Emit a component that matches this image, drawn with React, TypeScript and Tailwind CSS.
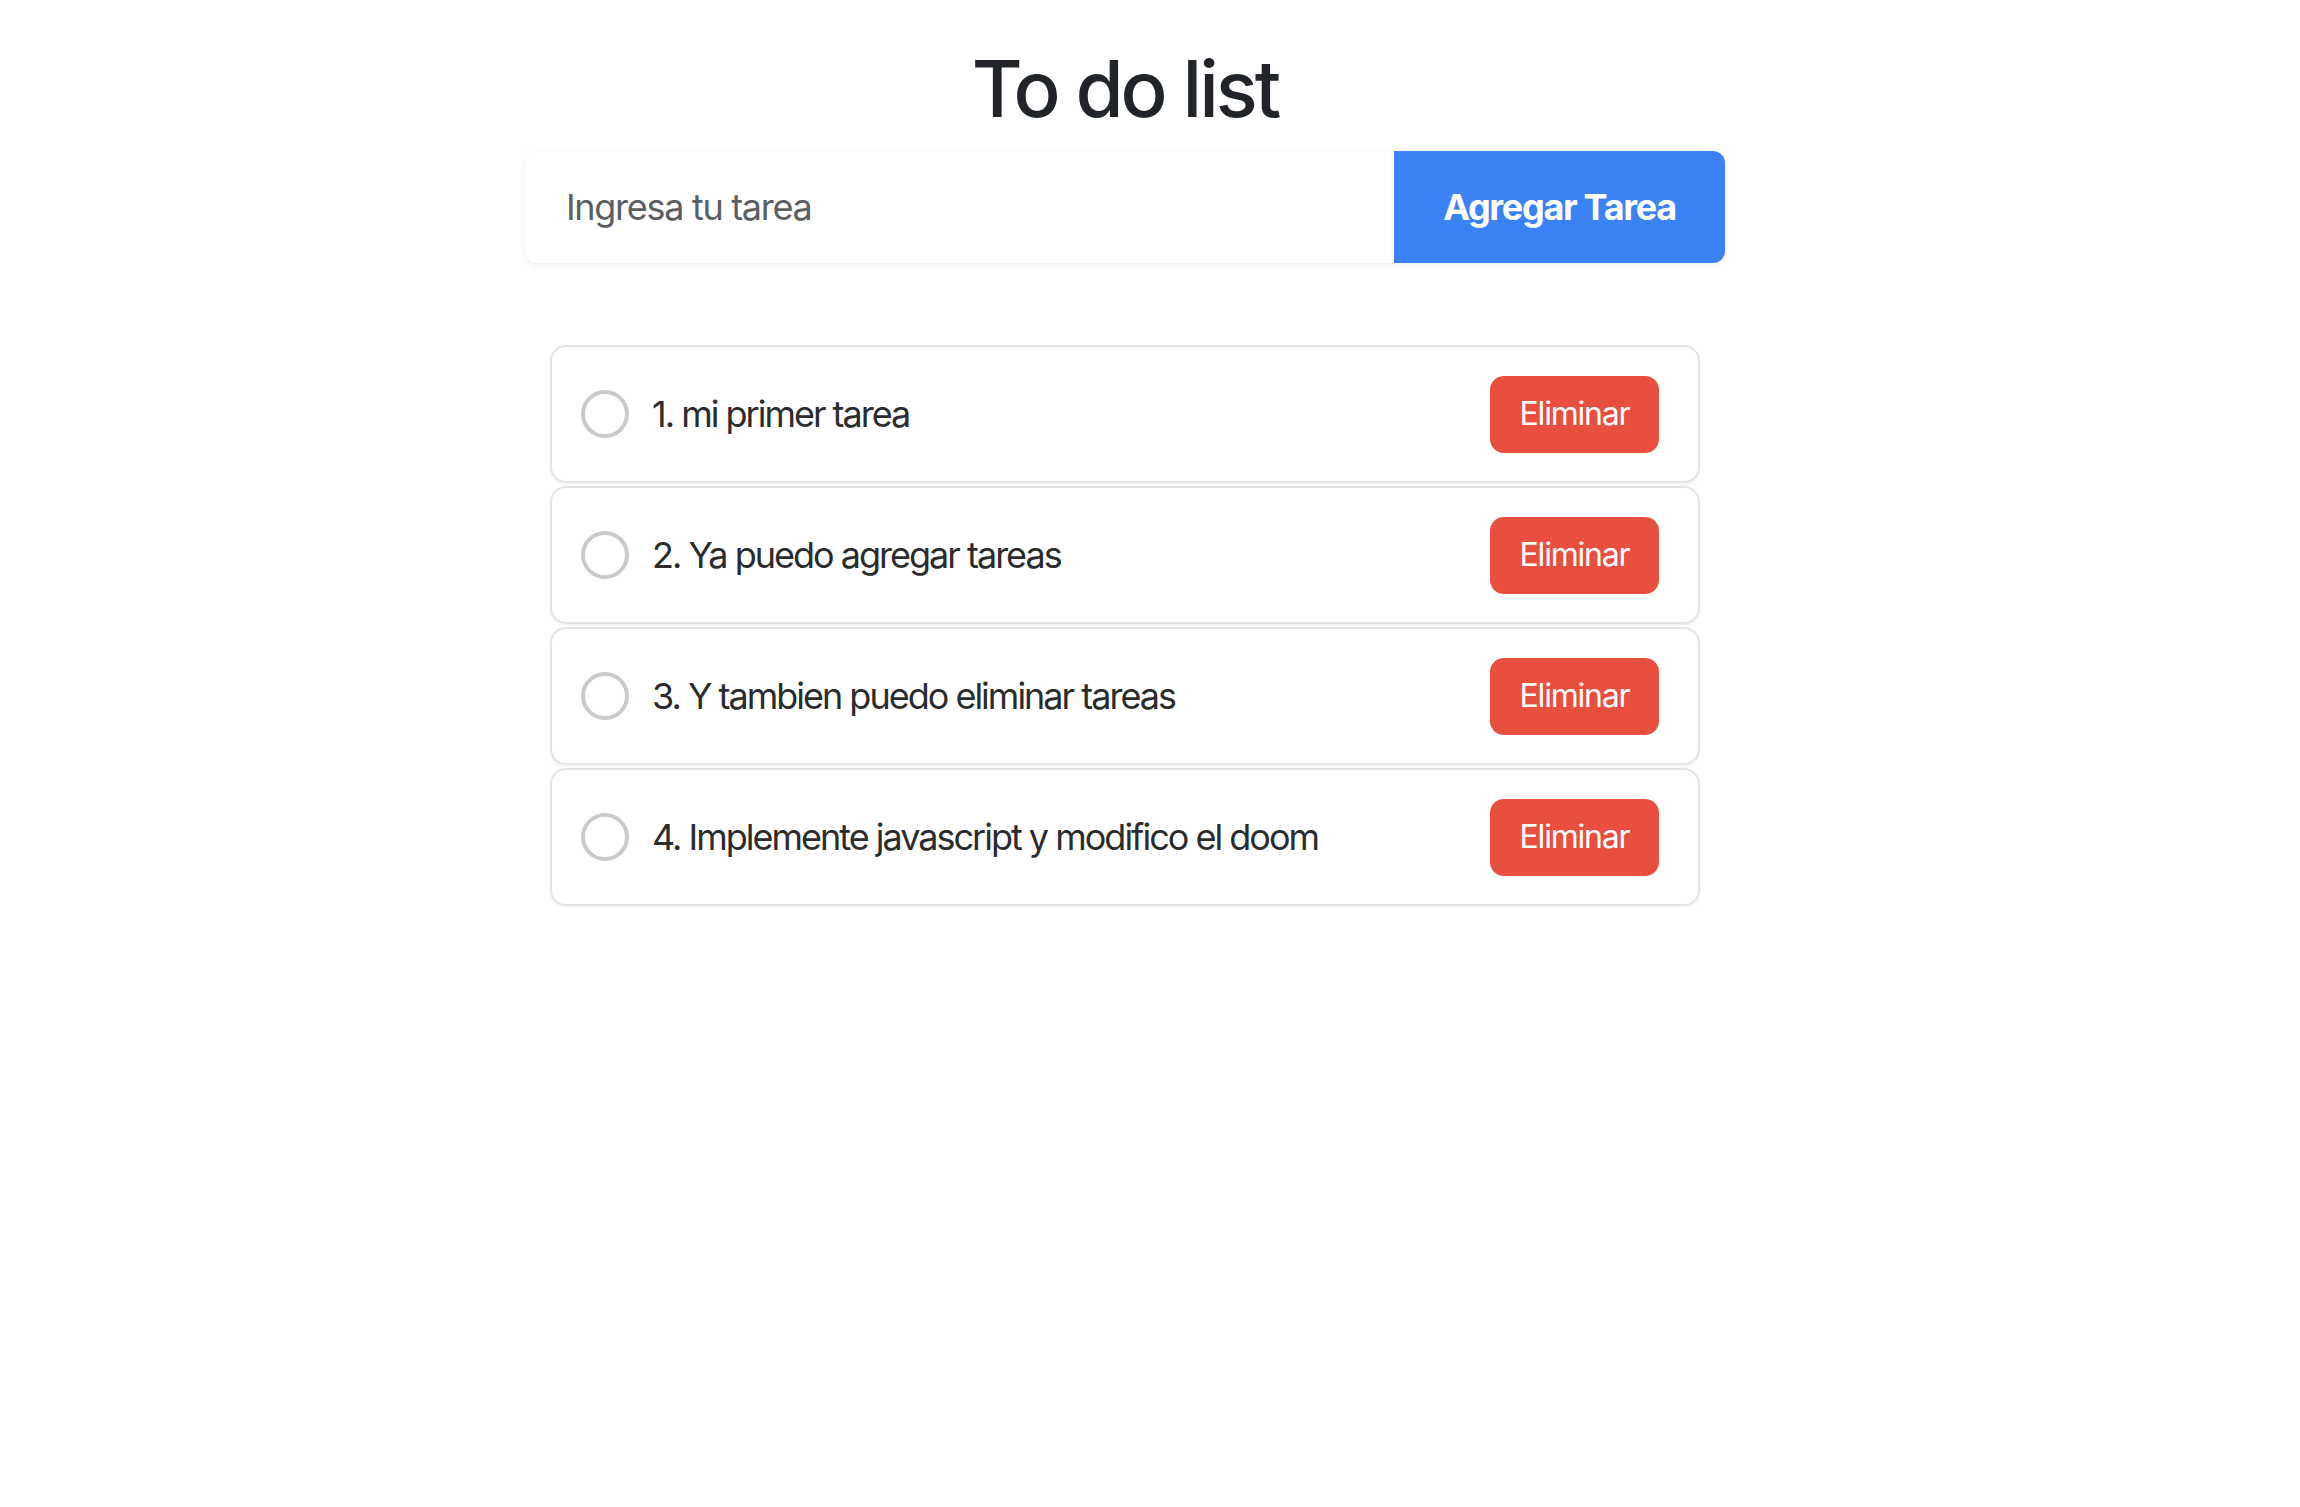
import { useState } from 'react'

const initialTasks = [
  'mi primer tarea',
  'Ya puedo agregar tareas',
  'Y tambien puedo eliminar tareas',
  'Implemente javascript y modifico el doom',
]

export default function App() {
  const [tasks, setTasks] = useState(initialTasks)
  const [text, setText] = useState('')

  const addTask = () => {
    if (!text.trim()) return
    setTasks([...tasks, text.trim()])
    setText('')
  }

  const removeTask = (index: number) => {
    setTasks(tasks.filter((_, i) => i !== index))
  }

  return (
    <div className="min-h-[1507px] w-[2250px] bg-white flex flex-col items-center font-['Inter',sans-serif]">
      <h1 className="mt-[42px] text-[78px] leading-[94px] font-medium tracking-[-3px] text-[#212529]">
        To do list
      </h1>

      <div className="mt-[15px] flex w-[1200px] h-[112px] rounded-[12px] shadow-[0_2px_6px_rgba(0,0,0,0.07)]">
        <input
          type="text"
          value={text}
          onChange={(e) => setText(e.target.value)}
          placeholder="Ingresa tu tarea"
          className="flex-1 min-w-0 rounded-l-[12px] bg-white pl-[41px] text-[36px] tracking-[-1.3px] text-[#212529] placeholder:text-[#5b5e62] outline-none"
        />
        <button
          onClick={addTask}
          className="w-[331px] rounded-r-[12px] bg-[#3b82f6] text-[36px] font-bold text-white tracking-[-1.3px]"
        >
          Agregar Tarea
        </button>
      </div>

      <ul className="mt-[82px] w-[1150px] flex flex-col gap-[3px]">
        {tasks.map((task, i) => (
          <li
            key={i}
            className="h-[138px] flex items-center justify-between rounded-[16px] border-2 border-[#e3e4e7] bg-white pl-[29px] pr-[39px] shadow-[0_2px_3px_rgba(0,0,0,0.05)]"
          >
            <div className="flex items-center gap-[23px]">
              <span className="w-[48px] h-[48px] rounded-full border-[4px] border-[#c9cacd]"></span>
              <span className="text-[36px] text-[#2b2c2e] tracking-[-2px]">
                {i + 1}. {task}
              </span>
            </div>
            <button
              onClick={() => removeTask(i)}
              className="w-[169px] h-[77px] rounded-[14px] bg-[#e94f3f] text-[32px] text-white tracking-[-1.2px]"
            >
              Eliminar
            </button>
          </li>
        ))}
      </ul>
    </div>
  )
}
